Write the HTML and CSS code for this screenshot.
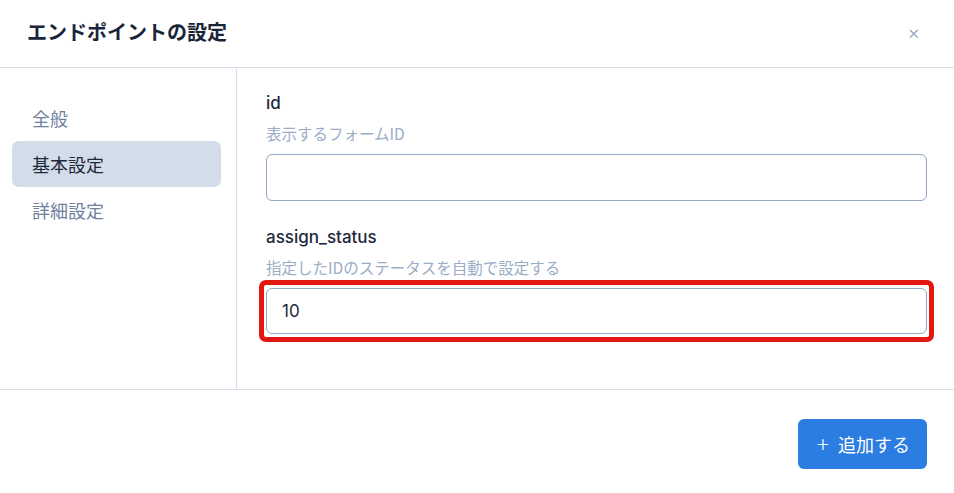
FILE: index.html
```html
<!DOCTYPE html>
<html lang="ja">
<head>
<meta charset="utf-8">
<link rel="stylesheet" href="styles.css">
</head>
<body>
<div class="dialog">
  <header class="header">
    <h1 class="title">エンドポイントの設定</h1>
    <span class="close">×</span>
  </header>
  <div class="body">
    <nav class="sidebar">
      <div class="nav-item">全般</div>
      <div class="nav-item active">基本設定</div>
      <div class="nav-item">詳細設定</div>
    </nav>
    <main class="main">
      <div class="field">
        <div class="label">id</div>
        <div class="desc">表示するフォームID</div>
        <div class="input-wrap"><div class="input"></div></div>
      </div>
      <div class="field">
        <div class="label">assign_status</div>
        <div class="desc">指定したIDのステータスを自動で設定する</div>
        <div class="input-wrap highlighted"><div class="input">10</div><span class="highlight"></span></div>
      </div>
    </main>
  </div>
  <footer class="footer">
    <button class="btn"><span class="plus">+</span>追加する</button>
  </footer>
</div>
</body>
</html>
```
FILE: styles.css
```css
* { box-sizing: border-box; }
html, body { margin: 0; padding: 0; background: #fff; }
body {
  font-family: "Inter", "Noto Sans CJK JP", sans-serif;
  color: #1e293b;
  width: 954px;
  height: 493px;
  overflow: hidden;
}
.header {
  height: 68px;
  border-bottom: 1px solid #d6dee9;
  display: flex;
  align-items: center;
  justify-content: space-between;
  padding: 0 34px 0 27px;
}
.title {
  margin: 0;
  font-size: 20px;
  font-weight: 700;
  color: #1a2538;
  line-height: 26px;
  margin-top: -3px;
  font-family: "Noto Sans CJK JP", sans-serif;
}
.close {
  font-size: 19px;
  font-weight: 300;
  color: #8f9db3;
  line-height: 20px;
  margin-top: -2px;
}
.body {
  display: flex;
  height: 322px;
  border-bottom: 1px solid #d6dee9;
}
.sidebar {
  width: 237px;
  border-right: 1px solid #d6dee9;
  padding: 27px 15px 0 12px;
}
.nav-item {
  height: 46px;
  line-height: 46px;
  padding-left: 20px;
  font-size: 18px;
  color: #6f819d;
  border-radius: 7px;
  font-family: "Noto Sans CJK JP", sans-serif;
}
.nav-item.active {
  background: #d2dde9;
  color: #1e293b;
}
.main {
  flex: 1;
  padding: 23px 27px 0 29px;
}
.field + .field { margin-top: 24px; }
.label {
  font-size: 17px;
  line-height: 24px;
  font-weight: 500;
  color: #1e293b;
}
.desc {
  margin-top: 8px;
  font-size: 15.5px;
  line-height: 20px;
  color: #9badc7;
  font-family: "Noto Sans CJK JP", sans-serif;
}
.input-wrap {
  position: relative;
  margin-top: 11px;
}
.input {
  height: 47px;
  border: 1px solid #95a8c3;
  border-radius: 6px;
  padding: 0 15px;
  font-size: 17px;
  line-height: 45px;
  color: #1e293b;
}
.highlighted .input { height: 46px; line-height: 44px; }
.highlight {
  position: absolute;
  left: -7px;
  top: -8px;
  right: -7px;
  bottom: -8px;
  border: 5px solid #e3170f;
  border-radius: 7px;
  pointer-events: none;
}
.footer {
  display: flex;
  justify-content: flex-end;
  padding: 29px 27px 0 0;
}
.btn {
  height: 50px;
  width: 129px;
  border: none;
  border-radius: 6px;
  background: #2c7de2;
  color: #fff;
  font-size: 18px;
  font-family: "Noto Sans CJK JP", sans-serif;
  display: flex;
  align-items: center;
  justify-content: center;
  gap: 9px;
  padding: 0 0 0 2px;
}
.plus {
  font-size: 22px;
  font-weight: 300;
  line-height: 1;
  margin-top: -3px;
}
```
